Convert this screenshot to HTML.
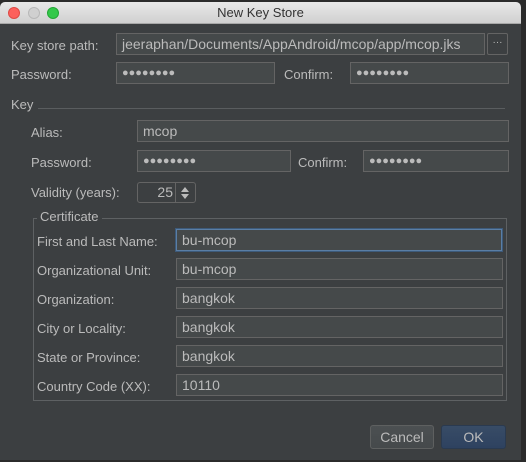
<!DOCTYPE html>
<html><head><meta charset="utf-8"><style>
*{margin:0;padding:0;box-sizing:border-box}
body{width:526px;height:462px;background:#2b2b2b;position:relative;overflow:hidden;font-family:"Liberation Sans",sans-serif;font-size:13px;color:#bbbbbb}
.win{position:absolute;left:0;top:2px;width:521px;height:458px;background:#3c3f41;border-radius:5px 5px 0 0;overflow:hidden}
.tb{position:absolute;left:0;top:0;width:521px;height:22px;background:linear-gradient(#e8e8e8,#d0d0d0);border-bottom:1px solid #a8a8a8;color:#333;text-align:center;line-height:22px;font-size:13px}
.dot{position:absolute;top:5px;width:12px;height:12px;border-radius:50%}
.a{position:absolute;white-space:nowrap}
.f{position:absolute;height:22px;background:#45494a;border:1px solid #646464;line-height:20px;padding-left:5px;color:#bbbbbb;white-space:nowrap;overflow:hidden;font-size:14px}
.pw{font-size:11px}
.btn{position:absolute;height:24px;border:1px solid #5e6060;border-radius:3px;background:linear-gradient(#4c5052,#45494b);text-align:center;line-height:22px;color:#bbbbbb;font-size:14px}
</style></head><body>
<div class="win">
<div class="tb">New Key Store</div>
<div class="dot" style="left:8px;background:#fc605c;border:1px solid #de4a45"></div>
<div class="dot" style="left:28px;background:#d0d0d0;border:1px solid #b8b8b8"></div>
<div class="dot" style="left:47px;background:#34c84a;border:1px solid #24a735"></div>

<div class="a" style="left:11px;top:36px">Key store path:</div>
<div class="f" style="left:116px;top:31px;width:369px">jeeraphan/Documents/AppAndroid/mcop/app/mcop.jks</div>
<div class="f" style="left:487px;top:31px;width:21px;padding:0;text-align:center;border-radius:2px;font-size:10px;line-height:18px;background:#3c3f41">···</div>

<div class="a" style="left:11px;top:65px">Password:</div>
<div class="f pw" style="left:116px;top:60px;width:159px">●●●●●●●●</div>
<div class="a" style="left:284px;top:65px">Confirm:</div>
<div class="f pw" style="left:350px;top:60px;width:159px">●●●●●●●●</div>

<div class="a" style="left:11px;top:95px">Key</div>
<div class="a" style="left:38px;top:106px;width:467px;height:1px;background:#5a5d5f"></div>

<div class="a" style="left:31px;top:123px">Alias:</div>
<div class="f" style="left:137px;top:118px;width:372px">mcop</div>
<div class="a" style="left:31px;top:153px">Password:</div>
<div class="f pw" style="left:137px;top:148px;width:154px">●●●●●●●●</div>
<div class="a" style="left:298px;top:153px">Confirm:</div>
<div class="f pw" style="left:363px;top:148px;width:146px">●●●●●●●●</div>

<div class="a" style="left:31px;top:183px">Validity (years):</div>
<div class="f" style="left:137px;top:180px;width:59px;height:21px;border-radius:3px;padding:0;background:#3c3f41">
 <div class="a" style="left:0;top:0;width:38px;text-align:right;padding-right:3px;line-height:19px">25</div>
 <div class="a" style="left:37px;top:0;width:1px;height:19px;background:#646464"></div>
 <svg class="a" style="left:41px;top:3px" width="12" height="14"><path d="M2 6 L6 1 L10 6Z M2 8 L6 13 L10 8Z" fill="#bbb"/></svg>
</div>

<div class="a" style="left:33px;top:216px;width:474px;height:183px;border:1px solid #5e6163"></div>
<div class="a" style="left:37px;top:207px;background:#3c3f41;padding:0 3px;font-size:13px">Certificate</div>

<div class="a" style="left:37px;top:232px">First and Last Name:</div>
<div class="f" style="left:176px;top:227px;width:326px;border-color:#5a7ea5;box-shadow:0 0 0 1px #3d5a7a">bu-mcop</div>
<div class="a" style="left:37px;top:261px">Organizational Unit:</div>
<div class="f" style="left:176px;top:256px;width:327px">bu-mcop</div>
<div class="a" style="left:37px;top:290px">Organization:</div>
<div class="f" style="left:176px;top:285px;width:327px">bangkok</div>
<div class="a" style="left:37px;top:319px">City or Locality:</div>
<div class="f" style="left:176px;top:314px;width:327px">bangkok</div>
<div class="a" style="left:37px;top:348px">State or Province:</div>
<div class="f" style="left:176px;top:343px;width:327px">bangkok</div>
<div class="a" style="left:37px;top:377px">Country Code (XX):</div>
<div class="f" style="left:176px;top:372px;width:327px">10110</div>

<div class="btn" style="left:370px;top:423px;width:64px">Cancel</div>
<div class="btn" style="left:441px;top:423px;width:65px;background:linear-gradient(#384c66,#2e4260);border-color:#2a3a50">OK</div>
</div>
</body></html>
